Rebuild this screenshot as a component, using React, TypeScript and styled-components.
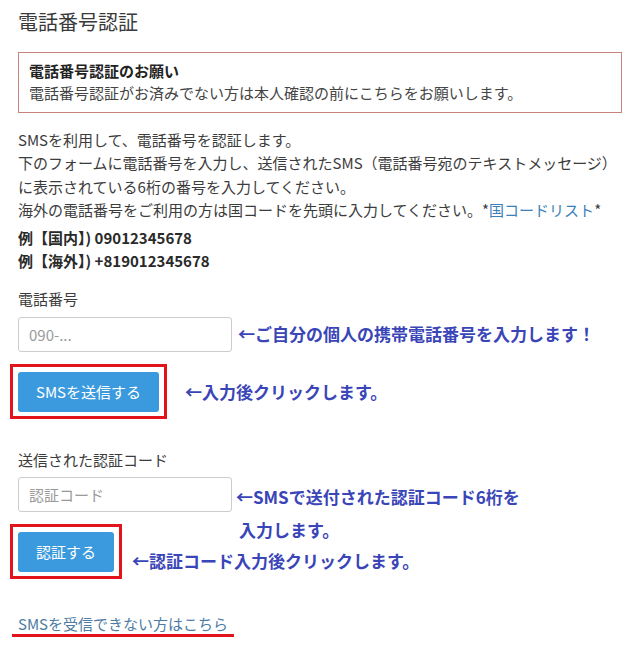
import React from "react";
import styled, { createGlobalStyle } from "styled-components";

const GlobalStyle = createGlobalStyle`
  html, body {
    margin: 0;
    padding: 0;
    background: #ffffff;
  }
  body {
    font-family: "Noto Sans CJK JP", "Noto Sans", sans-serif;
    color: #333333;
  }
  * { box-sizing: border-box; }
`;

const Page = styled.main`
  width: 640px;
  padding: 10px 18px 0 18px;
  font-size: 15px;
`;

const Title = styled.h1`
  margin: 0;
  font-size: 20px;
  line-height: 24px;
  font-weight: 400;
  color: #3a3a3a;
`;

const Notice = styled.section`
  margin-top: 18px;
  border: 1px solid #c8837d;
  padding: 7px 10px 8px;
  line-height: 22px;
`;

const NoticeTitle = styled.div`
  font-weight: 700;
  color: #222222;
`;

const NoticeText = styled.div`
  color: #444444;
`;

const Intro = styled.p`
  margin: 15px 0 0;
  line-height: 23.4px;
  color: #3c3c3c;
`;

const InlineLink = styled.a`
  color: #3b80b8;
  text-decoration: none;
`;

const Examples = styled.div`
  margin-top: 4px;
  line-height: 23px;
  font-weight: 700;
  color: #2a2a2a;
`;

const Label = styled.div<{ $top: number }>`
  margin-top: ${(p) => p.$top}px;
  line-height: 22px;
  color: #3c3c3c;
`;

const Row = styled.div<{ $top: number }>`
  display: flex;
  align-items: flex-start;
  margin-top: ${(p) => p.$top}px;
`;

const TextInput = styled.input`
  width: 214px;
  height: 35px;
  border: 1px solid #cccccc;
  border-radius: 3px;
  padding: 0 10px;
  font-family: inherit;
  font-size: 15px;
  color: #333333;
  outline: none;
  &::placeholder {
    color: #9a9a9a;
  }
`;

const HighlightFrame = styled.div`
  margin-left: -8px;
  border: 3px solid #e2131a;
  padding: 5px 5px 4px 5px;
  display: flex;
`;

const PrimaryButton = styled.button`
  height: 40px;
  padding: 0 18px;
  border: none;
  border-radius: 3px;
  background: #3b9ade;
  color: #ffffff;
  font-family: inherit;
  font-size: 15px;
  cursor: pointer;
`;

const Callout = styled.div<{ $gap: number; $top: number; $overhang?: boolean }>`
  margin-left: ${(p) => p.$gap}px;
  margin-top: ${(p) => p.$top}px;
  margin-bottom: ${(p) => (p.$overhang ? "-40px" : "0")};
  font-size: 17px;
  line-height: 33px;
  font-weight: 700;
  color: #3a45b7;
  white-space: nowrap;
`;

const CalloutIndent = styled.span`
  padding-left: 3px;
`;

const HelpMark = styled.div`
  display: inline-block;
  margin-top: 35px;
  margin-left: -6px;
  padding: 0 6px;
  border-bottom: 3px solid #e2131a;
  line-height: 20px;
`;

const HelpLink = styled.a`
  color: #4d7ba3;
  text-decoration: none;
`;

export default function App() {
  return (
    <>
      <GlobalStyle />
      <Page>
        <Title>電話番号認証</Title>
        <Notice>
          <NoticeTitle>電話番号認証のお願い</NoticeTitle>
          <NoticeText>電話番号認証がお済みでない方は本人確認の前にこちらをお願いします。</NoticeText>
        </Notice>
        <Intro>
          SMSを利用して、電話番号を認証します。
          <br />
          下のフォームに電話番号を入力し、送信されたSMS（電話番号宛のテキストメッセージ）
          <br />
          に表示されている6桁の番号を入力してください。
          <br />
          海外の電話番号をご利用の方は国コードを先頭に入力してください。*
          <InlineLink href="#">国コードリスト</InlineLink>*
        </Intro>
        <Examples>
          例【国内】) 09012345678
          <br />
          例【海外】) +819012345678
        </Examples>

        <Label $top={16}>電話番号</Label>
        <Row $top={7}>
          <TextInput placeholder="090-..." />
          <Callout $gap={6} $top={0}>←ご自分の個人の携帯電話番号を入力します！</Callout>
        </Row>
        <Row $top={12}>
          <HighlightFrame>
            <PrimaryButton>SMSを送信する</PrimaryButton>
          </HighlightFrame>
          <Callout $gap={18} $top={11}>←入力後クリックします。</Callout>
        </Row>

        <Label $top={30}>送信された認証コード</Label>
        <Row $top={6}>
          <TextInput placeholder="認証コード" />
          <Callout $gap={4} $top={3.5} $overhang>
            ←SMSで送付された認証コード6桁を
            <br />
            <CalloutIndent>入力します。</CalloutIndent>
          </Callout>
        </Row>
        <Row $top={12}>
          <HighlightFrame>
            <PrimaryButton>認証する</PrimaryButton>
          </HighlightFrame>
          <Callout $gap={10} $top={20}>←認証コード入力後クリックします。</Callout>
        </Row>

        <HelpMark>
          <HelpLink href="#">SMSを受信できない方はこちら</HelpLink>
        </HelpMark>
      </Page>
    </>
  );
}
